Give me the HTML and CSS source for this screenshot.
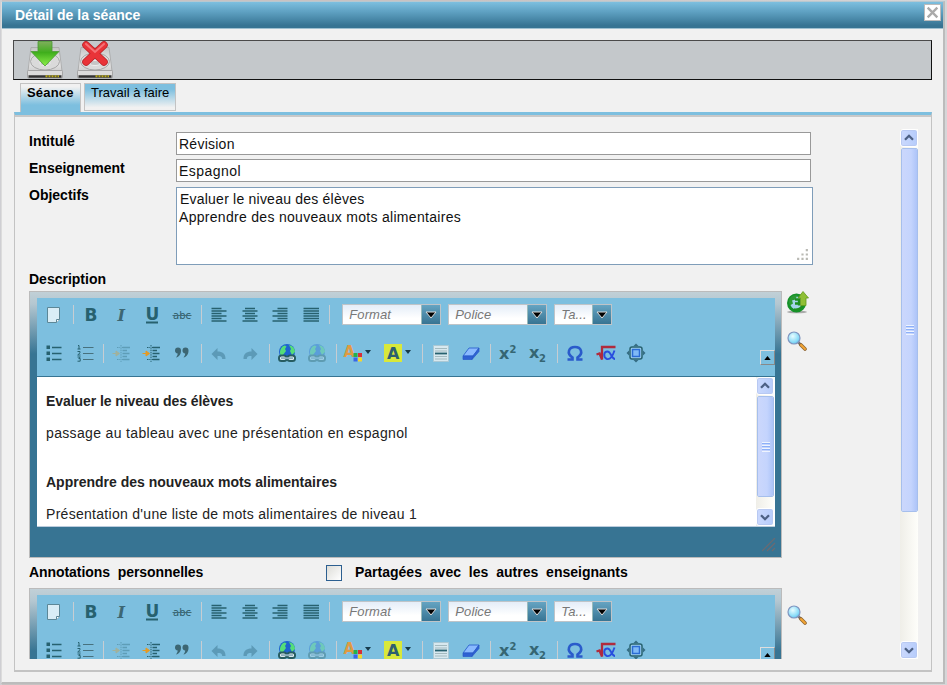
FILE: index.html
```html
<!DOCTYPE html>
<html lang="fr">
<head>
<meta charset="utf-8">
<title>Détail de la séance</title>
<link rel="stylesheet" href="styles.css">
</head>
<body>
<svg class="defs" aria-hidden="true">
  <defs>
    <linearGradient id="disk" x1="0" y1="0" x2="0" y2="1"><stop offset="0" stop-color="#c4c4c4"/><stop offset=".6" stop-color="#e9e9e9"/><stop offset="1" stop-color="#d0d0d0"/></linearGradient>
    <linearGradient id="green" x1="0" y1="0" x2="0" y2="1"><stop offset="0" stop-color="#7fae5c"/><stop offset=".45" stop-color="#3fae1c"/><stop offset="1" stop-color="#8df04a"/></linearGradient>
    <radialGradient id="glass" cx=".4" cy=".35" r=".7"><stop offset="0" stop-color="#e8fcff"/><stop offset=".7" stop-color="#8bdcf8"/><stop offset="1" stop-color="#5cbbea"/></radialGradient>
  </defs>
  <symbol id="drive" viewBox="0 0 36 38">
    <path d="M4 6.500h28L35 30H1z" fill="url(#disk)" stroke="#a5a5a5" stroke-width=".8"/>
    <ellipse cx="18" cy="20.500" rx="14.500" ry="8.500" fill="#dadada" stroke="#a8a8a8"/>
    <ellipse cx="18" cy="22" rx="5" ry="2.500" fill="#c5c5c5" stroke="#eee"/>
    <rect x=".5" y="29.500" width="35" height="7.500" rx="1" fill="#dcdcdc" stroke="#999" stroke-width=".8"/>
    <path d="M1.500 35.500h33" stroke="#333" stroke-width="2.500"/>
    <path d="M18.500 35.300h13.500" stroke="#b8a916" stroke-width="2" stroke-dasharray="2 1"/>
  </symbol>
  <symbol id="loupe" viewBox="0 0 20 20"><path d="M11 11l3 3" stroke="#777" stroke-width="2.500"/><path d="M14 14l4 4" stroke="#8f6430" stroke-width="3.600" stroke-linecap="round"/><path d="M14 14l4 4" stroke="#f3a535" stroke-width="2" stroke-linecap="round"/><circle cx="7" cy="7" r="6" fill="url(#glass)" stroke="#8096c0" stroke-width="1.200"/></symbol>
  <symbol id="up" viewBox="0 0 18 18"><path d="M4.500 11L9 6.500l4.500 4.500" fill="none" stroke="#4d6185" stroke-width="2.600"/></symbol>
  <symbol id="down" viewBox="0 0 18 18"><path d="M4.500 7L9 11.500 13.500 7" fill="none" stroke="#4d6185" stroke-width="2.600"/></symbol>
</svg>

<div class="dialog">
  <header class="title"><span>Détail de la séance</span>
    <button class="close" aria-label="Fermer"><svg viewBox="0 0 14 14"><path d="M2.500 2.500l9 9M11.500 2.500l-9 9" stroke="#aaa" stroke-width="2.200"/></svg></button>
  </header>
  <div class="actions">
    <svg viewBox="0 0 36 38"><use href="#drive"/><path d="M11 .5h14v10H32L18 25 4 10.500h7z" fill="url(#green)" stroke="#4a9a32" stroke-width=".8"/></svg>
    <svg viewBox="0 0 36 38"><use href="#drive"/><path d="M9 4L27 21M27 4L9 21" stroke="#b81f24" stroke-width="7.500" stroke-linecap="round"/><path d="M9 4L27 21M27 4L9 21" stroke="#e93338" stroke-width="6" stroke-linecap="round"/><path d="M9 3l9 8 9-8" fill="none" stroke="#f57276" stroke-width="2" stroke-linecap="round"/></svg>
  </div>
  <nav class="tabs"><div class="tab on"><span>Séance</span></div><div class="tab"><span>Travail à faire</span></div></nav>
  <section class="panel">
    <div class="form">
      <div class="row"><label>Intitulé</label><div class="input"><span class="t1">Révision</span></div></div>
      <div class="row"><label>Enseignement</label><div class="input"><span class="t2">Espagnol</span></div></div>
      <div class="row goals"><label>Objectifs</label>
        <div class="area"><span class="t3">Evaluer le niveau des élèves</span><br><span class="t4">Apprendre des nouveaux mots alimentaires</span>
          <svg class="grip" viewBox="0 0 12 12"><path d="M9 1h2v2H9zM5 5h2v2H5zM9 5h2v2H9zM1 9h2v2H1zM5 9h2v2H5zM9 9h2v2H9z" fill="#b9b9b3"/></svg></div></div>
      <div class="head">Description</div>
      <div class="block">
        <div class="editor">
          <div class="tools"></div>
          <div class="content">
            <div class="doc">
              <p class="b"><span class="d1">Evaluer le niveau des élèves</span></p>
              <p><span class="d2">passage au tableau avec une présentation en espagnol</span></p>
              <p class="b gap"><span class="d3">Apprendre des nouveaux mots alimentaires</span></p>
              <p class="last"><span class="d4">Présentation d'une liste de mots alimentaires de niveau 1</span></p>
            </div>
            <div class="scroll small"><svg class="sb"><use href="#up"/></svg><div class="thumb"><i></i></div><div class="rest"></div><svg class="sb"><use href="#down"/></svg></div>
          </div>
          <svg class="resize" viewBox="0 0 14 14"><path d="M0 13L13 0M5 13l8-8M10 13l3-3" stroke="#6d6a70" stroke-width="1.200"/></svg>
        </div>
        <div class="side">
          <svg viewBox="0 0 22 22"><ellipse cx="10" cy="20.500" rx="10" ry="1.300" fill="#aaa"/><circle cx="9.500" cy="11.500" r="8" fill="#a5d3ea" stroke="#16922a" stroke-width="3"/><path d="M2 11C2 6 6 3 10 4L8.500 8 5 9l1 3-3 2z" fill="#2c9a35"/><path d="M8 8h4v6M8 12h4M7 18c6 1 9-3 9-7" fill="none" stroke="#1d8f20" stroke-width="2.300"/><path d="M16 0l5.500 6.500H19V14h-5.500V6.500H11z" fill="#8fbf35" stroke="#619a1a" stroke-width=".8"/></svg>
          <svg class="find"><use href="#loupe"/></svg>
        </div>
      </div>
      <div class="head notes"><span class="l5">Annotations personnelles</span><span class="check"></span><span class="l6">Partagées avec les autres enseignants</span></div>
      <div class="block">
        <div class="editor"><div class="tools"></div></div>
        <div class="side second"><svg class="find"><use href="#loupe"/></svg></div>
      </div>
    </div>
    <div class="scroll"><svg class="sb"><use href="#up"/></svg><div class="thumb"><i></i></div><div class="rest"></div><svg class="sb"><use href="#down"/></svg></div>
  </section>
</div>
<script src="toolbar.js"></script>
</body>
</html>
```
FILE: toolbar.js
```javascript
const icons = {
  page: '<path d="M3.500 2.500h12v12l-3 3h-9z" fill="#d9edf6" stroke="#5c8797"/><path d="M15.500 14.500h-3v3" fill="#fff" stroke="#5c8797"/>',
  bold: '<text x="3.500" y="15.500" class="g-bold">B</text>',
  italic: '<text x="5.500" y="15.500" class="g-italic">I</text>',
  under: '<text x="3.500" y="14.500" class="g-bold">U</text><path d="M4 17.500h12" stroke="#27616f" stroke-width="2"/>',
  strike: '<text x="1" y="14" class="g-abc" textLength="18">abc</text><path d="M.5 10.500h19" stroke="#3f6b78" stroke-width="1"/>',
  al: '<path d="M2.500 3.500h10M2.500 6h15M2.500 8.500h10M2.500 11h15M2.500 13.500h10M2.500 16h15" class="ln"/>',
  ac: '<path d="M5 3.500h10M2.500 6h15M5 8.500h10M2.500 11h15M5 13.500h10M2.500 16h15" class="ln"/>',
  ar: '<path d="M7.500 3.500h10M2.500 6h15M7.500 8.500h10M2.500 11h15M7.500 13.500h10M2.500 16h15" class="ln"/>',
  aj: '<path d="M2.500 3.500h15.500M2.500 6h15.500M2.500 8.500h15.500M2.500 11h15.500M2.500 13.500h15.500M2.500 16h15.500" class="ln"/>',
  ul: '<path d="M2.500 2.500H6V6H2.500zM2.500 8.500H6V12H2.500zM2.500 14.500H6V18H2.500z" fill="#27616f"/><path d="M8 4.500h9.500M8 10.500h9.500M8 16.500h9.500" stroke="#27616f" stroke-width="1.300"/>',
  ol: '<path d="M3 2.500h1v3.500m-1.500 0h3M2.500 8.500H5v1.300L2.700 12h2.800M2.500 14h2.800L3.700 15.500h1.500v2.700H2.500" fill="none" stroke="#27616f"/><path d="M8 4.500h10.500M8 10.500h10.500M8 16.500h10.500" stroke="#47717e" stroke-width="1.200"/>',
  dent: '<path d="M5 4.500h3m2 0h8M5 16.500h3m2 0h4M9 2v17" stroke="#27616f" stroke-dasharray="1.500 .8" fill="none"/><path d="M10.500 4.500h7.500M10.500 7.500h4.500M10.500 10.500h7M10.500 13.500h4.500M10.500 16.500h7" stroke="#27616f" stroke-width="1.500"/><path d="M.5 10.500H6M4 8l3.500 2.500L4 13z" fill="#e69a22" stroke="#e69a22"/>',
  quote: '<path d="M3 7.500a3 3 0 1 1 6 0c0 4-2 6.500-5 7 1-1.200 1.700-2.500 1.700-4A3 3 0 0 1 3 7.500zM10.500 7.500a3 3 0 1 1 6 0c0 4-2 6.500-5 7 1-1.200 1.700-2.500 1.700-4a3 3 0 0 1-2.700-3z" fill="#3c6673"/>',
  undo: '<path d="M2.500 11l6-6v3.500c5 0 8 2 8 7.500h-3.300c0-2.500-1.500-3-4.700-3v4z" fill="#5592ae"/>',
  link: '<circle cx="10" cy="9" r="8" fill="#1d63cf"/><path d="M3 10c0-4 2-7 5-7.500l1.500 1L8 6l1 2-3 4H3.500zM12 2c4 1 6 4 6 7l-3 3-2-4 1-2z" fill="#54dd78"/><rect x="2" y="12.500" width="7.500" height="5.500" rx="2.500" fill="#f0f6f8" stroke="#265c61" stroke-width="2"/><rect x="10.500" y="12.500" width="7.500" height="5.500" rx="2.500" fill="#f0f6f8" stroke="#265c61" stroke-width="2"/><path d="M4 15.200h12" stroke="#8caebb" stroke-width="2"/>',
  fore: '<text x=".5" y="14" class="g-fore">A</text><path d="M10.500 10h4v4h-4z" fill="#24b14b"/><path d="M15 10h4v4h-4z" fill="#d62e39"/><path d="M10.500 14.500h4v4h-4z" fill="#3a66e6"/><path d="M15 14.500h4v4h-4z" fill="#f5d62e"/>',
  back: '<path d="M1 1h18v18H1z" fill="#d9e83a"/><text x="4" y="15.500" class="g-back">A</text>',
  hr: '<path d="M2.500 2.500h15v16h-15z" fill="#d7e8ef" stroke="#aac8d4"/><path d="M4 5.500h12M4 8h12M4 13.500h12M4 16h12" stroke="#a3babf"/><path d="M4 10.500h12" stroke="#27616f" stroke-width="1.800"/>',
  erase: '<path d="M8 5h10l-6 8H2z" fill="#8abaff" stroke="#356bd0"/><path d="M2 13h10l-1 3.500H2zM18 5v3.500L11 16.500l1-3.500z" fill="#2f62d3" stroke="#2a5ac8" stroke-width=".7"/>',
  sup: '<text x="1" y="16" class="g-x">x</text><text x="11.500" y="9.500" class="g-n">2</text>',
  sub: '<text x="1" y="15" class="g-x">x</text><text x="11" y="19" class="g-n">2</text>',
  omega: '<path d="M2.500 16.500H7.500V14.500C1 10 4 4 10 4s9 6 2.500 10.500v2h5" fill="none" stroke="#2a5bcb" stroke-width="2.600"/>',
  root: '<path d="M.5 11.500l3-1 2.500 6V4h13.500" fill="none" stroke="#b02b3d" stroke-width="2.300"/><path d="M18.500 7.500c-3 9-5.500 9-7.500 8.500-4-1.500-3.500-7.500.5-7.500 3.500 0 4 7.500 7.500 7.500" fill="none" stroke="#284fdf" stroke-width="1.900"/>',
  max: '<rect x="4" y="4" width="12" height="12" rx="2" fill="#a2d2ee" stroke="#27616f" stroke-width="1.500"/><rect x="6.500" y="6.500" width="7" height="7" fill="#7fb9f6" stroke="#2b6cd4" stroke-width="1.500"/><path d="M10 .5l2.500 2.500h-5zM10 19.500l2.500-2.500h-5zM.5 10l2.500-2.500v5zM19.500 10l-2.500-2.500v5z" fill="#356d83"/>'
};
const rows = [
  ['page', '|', 'bold', 'italic', 'under', 'strike', '|', 'al', 'ac', 'ar', 'aj', '|', 'Format', 'Police', 'Ta...'],
  ['ul', 'ol', '|', 'dent off', 'dent', 'quote', '|', 'undo off2', 'undo off2 flip', '|', 'link', 'link off', '|',
    'fore menu', 'back menu', '|', 'hr', 'erase', '|', 'sup', 'sub', '|', 'omega', 'root', 'max']
];
const combos = { 'Format': 'format', 'Police': 'police', 'Ta...': 'size' };

function item(name) {
  if (name === '|') return '<i class="sep"></i>';
  if (combos[name]) {
    return `<div class="combo ${combos[name]}"><span>${name}</span><b><svg viewBox="0 0 12 8"><path d="M1 1h10L6 7z" fill="#000" stroke="#ddd"/></svg></b></div>`;
  }
  const [id, ...mods] = name.split(' ');
  const caret = mods.includes('menu') ? '<i class="caret"></i>' : '';
  return `<div class="cell ${mods.join(' ')}"><svg viewBox="0 0 20 20">${icons[id]}</svg>${caret}</div>`;
}

document.querySelectorAll('.tools').forEach(el => {
  el.innerHTML = rows.map(r => `<div class="line">${r.map(item).join('')}</div>`).join('') +
    '<div class="collapse"><svg viewBox="0 0 8 5"><path d="M4 0l4 5H0z"/></svg></div>';
});
```
FILE: styles.css
```css
* { box-sizing: border-box; }
body {
  margin: 0; width: 947px; height: 685px; overflow: hidden; padding: 1px 2px 1px 1px;
  background: linear-gradient(90deg, #cfcfd3 0 2px, #c8c2c2 2px 50%, #d6d6d8);
  font-family: "Liberation Sans", Arial, sans-serif; font-size: 14px; color: #111;
}
.defs { position: absolute; width: 0; height: 0; }
.dialog { height: 683px; background: #f1f1f1; border: 1px solid #bcbcbc; border-width: 1px 2px 2px 1px; border-top-color: #b7c8d0; border-left-color: #dcdcdc; }
.title {
  height: 27px; padding: 0 2px 0 13px; display: flex; align-items: flex-start; justify-content: space-between;
  background: linear-gradient(#7dbfdf 0, #5d9fc0 40%, #377493 90%, #377493); border-bottom: 1px solid #9fc0d0;
  color: #fff; font-weight: bold; line-height: 26px;
}
.close { width: 17px; height: 17px; margin-top: 2px; padding: 0; border: 1px solid #bbb; background: #fff; display: flex; }
.close svg { width: 15px; height: 15px; }
.actions { height: 40px; margin: 11px 11px 0; border: 1px solid #111; border-top-color: #4a4a4a; border-left-color: #4a4a4a; background: #c4c8cb; padding-left: 13px; display: flex; gap: 14px; }
.actions svg { width: 36px; height: 38px; }
.tabs { height: 32px; padding: 3px 0 0 18px; display: flex; gap: 3px; }
.tab { height: 28px; border: 1px solid #c3c3c3; background: linear-gradient(#7dbfdf 0, #7dbfdf 20%, #f1f1f1 90%); width: 92px; padding-left: 6px; font-size: 13px; line-height: 17px; white-space: nowrap; color: #000; }
.tab.on { height: 29px; width: 61px; border-bottom: 0; background: linear-gradient(#f1f1f1 10%, #7dbfdf 75%); font-weight: bold; letter-spacing: .2px; }
.panel { margin: 0 11px 0 12px; height: 560px; border: 1px solid #c3c3c3; border-bottom-width: 2px; border-top: 3px solid #7dbfdf; position: relative; display: flex; padding: 14px 13px 0 14px; box-shadow: inset 0 2px #c8c8c8; }
.form { width: 871px; height: 530px; overflow: hidden; padding-top: 3px; }
.row { display: flex; height: 27px; }
.row label { width: 147px; font-weight: bold; line-height: 19px; color: #000; }
.l5 { letter-spacing: -.07px; word-spacing: 4px; }
.l6 { word-spacing: 4px; }
.t1 { letter-spacing: .25px; }
.t2 { letter-spacing: .45px; }
.t3 { letter-spacing: .22px; margin-left: 1px; }
.t4 { letter-spacing: .3px; }
.d1 { letter-spacing: -.07px; }
.d2 { letter-spacing: .34px; }
.d4 { letter-spacing: .29px; }
.input { width: 635px; height: 23px; border: 1px solid #999; background: #fff; padding-left: 2px; line-height: 22px; }
.goals { height: 82px; }
.area { width: 637px; height: 78px; margin-top: 1px; border: 1px solid #7f9db9; background: #fff; padding: 2px 2px; line-height: 18px; position: relative; }
.grip { position: absolute; right: 3px; bottom: 3px; width: 13px; height: 13px; }
.head { height: 23px; padding-top: 2px; line-height: 18px; font-weight: bold; color: #000; }
.block { display: flex; }
.editor { width: 753px; height: 267px; flex: none; border: 1px solid #bbb; padding: 6px 6px 6px 7px; background: linear-gradient(#c1d0d7 0, #b4c7d1 12px, #377493 62px); position: relative; }
.tools { height: 79px; background: #7dbfdf; padding: 0 0 0 2px; border-bottom: 1px solid #377493; position: relative; }
.line { height: 44px; display: flex; align-items: center; }
.line:first-child { height: 33px; }
.cell { width: 30.4px; display: flex; align-items: center; justify-content: center; flex: none; }
.cell svg { width: 20px; height: 20px; overflow: visible; }
.cell.off { opacity: .35; }
.cell.off2 { opacity: .8; }
.flip svg { transform: scaleX(-1); }
.cell.menu { width: 40px; justify-content: flex-start; padding-left: 4px; }
.caret { border: 3px solid transparent; border-top: 4px solid #173b4c; border-bottom: 0; margin: -2px 0 0 2px; }
.sep { width: 1px; height: 19px; margin: 0 2px 0 3.600px; background: #c7cdd2; flex: none; }
.combo { height: 21px; border: 1px solid #bfc4c8; background: linear-gradient(#e4edf8, #fff 70%); display: flex; margin-right: 7px; color: #777; font-style: italic; font-size: 13px; letter-spacing: .1px; line-height: 20px; }
.combo span { flex: 1; padding-left: 6px; }
.combo b { width: 19px; background: linear-gradient(#65a4c2, #377493); border-left: 1px solid #9bb; display: flex; align-items: center; justify-content: center; }
.combo svg { width: 12px; height: 8px; }
.format { width: 99px; margin-left: 10px; }
.police { width: 99px; }
.size { width: 58px; }
.collapse { position: absolute; right: 0; bottom: 11px; width: 15px; height: 15px; border: 1px solid #ddd; border-right-color: #888; border-bottom-color: #888; display: flex; align-items: center; justify-content: center; }
.collapse svg { width: 7px; height: 4px; }
.ln { stroke: #27616f; stroke-width: 1.300; fill: none; }
.g-bold { font: bold 17px "DejaVu Sans", sans-serif; fill: #27616f; }
.g-italic { font: italic bold 16px "DejaVu Serif", serif; fill: #3c6673; }
.g-abc { font: 10px "DejaVu Sans", sans-serif; fill: #2f5c69; }
.g-fore { font: bold 15px "DejaVu Sans", sans-serif; fill: #df9a42; }
.g-back { font: bold 16px "DejaVu Sans", sans-serif; fill: #2d5f70; }
.g-x { font: bold 16px "DejaVu Sans", sans-serif; fill: #356673; }
.g-n { font: bold 10px "DejaVu Sans", sans-serif; fill: #356673; }
.content { height: 150px; background: #fff; display: flex; overflow: hidden; border-bottom: 1px solid #bcd; }
.doc { width: 719px; padding: 15px 0 0 9px; color: #222; }
.doc p { margin: 0 0 14px; height: 18px; line-height: 18px; white-space: nowrap; }
.doc .b { font-weight: bold; }
.doc .gap { margin-top: 31px; }
.doc .last { margin: 0; }
.resize { position: absolute; right: 5px; bottom: 5px; width: 14px; height: 14px; }
.side { padding: 0 0 0 5px; display: flex; flex-direction: column; }
.side svg { width: 22px; height: 23px; }
.side .find { width: 20px; height: 20px; margin-top: 17px; }
.notes { height: 30px; padding-top: 5px; display: flex; }
.l5 { width: 297px; }
.check { width: 16px; height: 16px; border: 1px solid #2c5f90; background: linear-gradient(135deg, #ddddd8, #fff); margin: 2px 13px 0 0; }
.scroll { width: 18px; height: 530px; display: flex; flex-direction: column; background: linear-gradient(90deg, #efeee8, #fefefa); }
.sb { width: 18px; height: 18px; flex: none; border: 1px solid #fff; border-radius: 3px; background: linear-gradient(90deg, #cbd9fd, #b6ccfb); box-shadow: inset 0 0 0 1px #b8c9f2; }
.thumb { height: 364px; flex: none; margin: 1px 0 0 1px; border: 1px solid #fff; outline: 1px solid #a6bfec; outline-offset: -1px; border-radius: 2px; background: linear-gradient(90deg, #cbd7fc, #c4d4fd 60%, #adc4f8); display: flex; align-items: center; justify-content: center; }
.thumb i { width: 8px; height: 10px; background: repeating-linear-gradient(#eef4fe 0 1px, #8cb0f8 1px 2px, transparent 2px 3px); }
.rest { flex: 1; }
.small { height: 149px; }
.small .thumb { height: 101px; }
```
